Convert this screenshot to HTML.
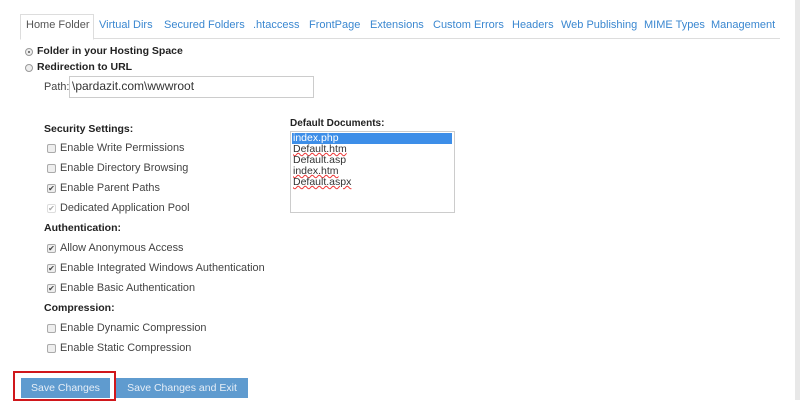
<!DOCTYPE html>
<html><head><style>
body{margin:0;width:800px;height:400px;background:#fff;font-family:"Liberation Sans",sans-serif;position:relative;overflow:hidden;color:#333}
.a{position:absolute;white-space:nowrap}
.t{font-size:11px;color:#3a87d0;top:19px}
.lb{font-size:10.9px;color:#444}
.b{font-weight:bold;font-size:10.5px;color:#222}
.cb{position:absolute;width:7px;height:7px;border:1px solid #aaa;border-radius:2px;background:#eee;font-size:8px;line-height:7px;text-align:center;color:#444}
.rd{position:absolute;width:6px;height:6px;border:1px solid #999;border-radius:50%;background:#eee}
.btn{position:absolute;top:378px;height:20px;background:#5f9bcf;color:#e6eef7;font-size:10.5px;line-height:20px;text-align:center}
.li{font-size:10.5px;color:#333;left:293px;line-height:11px}
.sq{text-decoration:underline wavy #e33;text-decoration-thickness:1px;text-underline-offset:0px}
</style></head><body>
<div class="a" style="left:20px;top:14px;width:72px;height:24px;border:1px solid #ddd;border-bottom:1px solid #fff;background:#fff;z-index:2"></div>
<div class="a" style="left:20px;top:38px;width:760px;height:1px;background:#ddd"></div>
<div class="a" style="left:795px;top:0;width:5px;height:400px;background:#e8e8e8"></div>
<div class="a t" style="left:26px;color:#555;z-index:3">Home Folder</div>
<div class="a t" style="left:99px">Virtual Dirs</div>
<div class="a t" style="left:164px">Secured Folders</div>
<div class="a t" style="left:253px">.htaccess</div>
<div class="a t" style="left:309px">FrontPage</div>
<div class="a t" style="left:370px">Extensions</div>
<div class="a t" style="left:433px">Custom Errors</div>
<div class="a t" style="left:512px">Headers</div>
<div class="a t" style="left:561px">Web Publishing</div>
<div class="a t" style="left:644px">MIME Types</div>
<div class="a t" style="left:711px">Management</div>

<div class="rd" style="left:25px;top:48px"><div style="width:2px;height:2px;background:#555;border-radius:50%;margin:2px"></div></div>
<div class="a b" style="left:37px;top:45px">Folder in your Hosting Space</div>
<div class="rd" style="left:25px;top:64px"></div>
<div class="a b" style="left:37px;top:61px">Redirection to URL</div>
<div class="a lb" style="left:44px;top:81px">Path:</div>
<div class="a" style="left:69px;top:76px;width:243px;height:20px;border:1px solid #ccc"></div>
<div class="a" style="left:72px;top:79px;font-size:12px;color:#333">\pardazit.com\wwwroot</div>

<div class="a b" style="left:44px;top:123px">Security Settings:</div>
<div class="cb" style="left:47px;top:144px"></div><div class="a lb" style="left:60px;top:142px">Enable Write Permissions</div>
<div class="cb" style="left:47px;top:164px"></div><div class="a lb" style="left:60px;top:162px">Enable Directory Browsing</div>
<div class="cb" style="left:47px;top:184px">✔</div><div class="a lb" style="left:60px;top:182px">Enable Parent Paths</div>
<div class="cb" style="left:47px;top:204px;border-color:#ddd;color:#aaa;background:#fff">✔</div><div class="a lb" style="left:60px;top:202px">Dedicated Application Pool</div>
<div class="a b" style="left:44px;top:222px">Authentication:</div>
<div class="cb" style="left:47px;top:244px">✔</div><div class="a lb" style="left:60px;top:242px">Allow Anonymous Access</div>
<div class="cb" style="left:47px;top:264px">✔</div><div class="a lb" style="left:60px;top:262px">Enable Integrated Windows Authentication</div>
<div class="cb" style="left:47px;top:284px">✔</div><div class="a lb" style="left:60px;top:282px">Enable Basic Authentication</div>
<div class="a b" style="left:44px;top:302px">Compression:</div>
<div class="cb" style="left:47px;top:324px"></div><div class="a lb" style="left:60px;top:322px">Enable Dynamic Compression</div>
<div class="cb" style="left:47px;top:344px"></div><div class="a lb" style="left:60px;top:342px">Enable Static Compression</div>

<div class="a b" style="left:290px;top:118px;font-size:10px">Default Documents:</div>
<div class="a" style="left:290px;top:131px;width:163px;height:80px;border:1px solid #ccc"></div>
<div class="a" style="left:292px;top:133px;width:160px;height:11px;background:#3d8ee8"></div>
<div class="a li" style="top:133px;color:#fff">index.php</div>
<div class="a li sq" style="top:144px">Default.htm</div>
<div class="a li" style="top:155px">Default.asp</div>
<div class="a li sq" style="top:166px">index.htm</div>
<div class="a li sq" style="top:177px">Default.aspx</div>

<div class="a" style="left:13px;top:371px;width:99px;height:26px;border:2px solid #d0171b"></div>
<div class="btn" style="left:21px;width:89px">Save Changes</div>
<div class="btn" style="left:116px;width:132px">Save Changes and Exit</div>
</body></html>
